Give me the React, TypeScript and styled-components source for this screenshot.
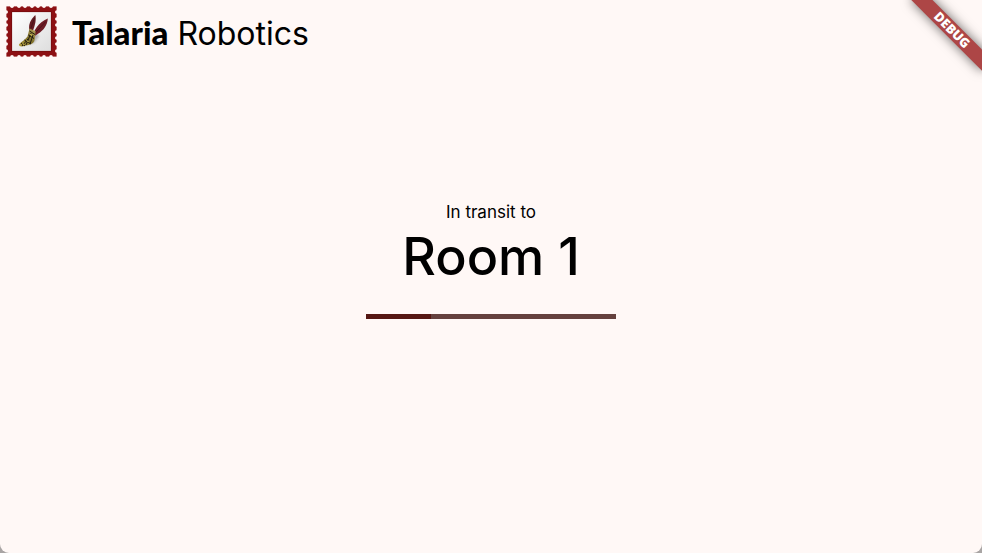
import React from "react";
import styled, { createGlobalStyle } from "styled-components";

const GlobalStyle = createGlobalStyle`
  * { box-sizing: border-box; }
  body { margin: 0; background: #a9a5a4; }
`;

const Screen = styled.div`
  position: relative;
  display: flex;
  flex-direction: column;
  min-height: 100vh;
  overflow: hidden;
  border-radius: 0 0 9px 9px;
  background: #fff8f6;
  color: #000;
  font-family: Inter, "Liberation Sans", sans-serif;
`;

const Header = styled.header`
  display: flex;
  align-items: center;
  gap: 14px;
  padding: 5px;
`;

const StampIcon = styled.svg`
  flex: none;
  width: 53px;
  height: 53px;
`;

const Brand = styled.h1`
  margin: 0;
  padding-top: 2px;
  font-size: 32px;
  line-height: 40px;
  font-weight: 400;
`;

const BrandStrong = styled.span`
  font-family: Lato, sans-serif;
  font-size: 33px;
  font-weight: 900;
`;

const Status = styled.main`
  flex: 1;
  display: flex;
  flex-direction: column;
  align-items: center;
  justify-content: center;
  padding-bottom: 96px;
`;

const Caption = styled.p`
  margin: 0;
  font-size: 17px;
  line-height: 20px;
`;

const Destination = styled.h2`
  margin: 0 0 22px;
  font-size: 52px;
  line-height: 70px;
  font-weight: 500;
`;

const Track = styled.div`
  width: 250px;
  max-width: 100%;
  height: 5px;
  background: #65413e;
`;

const Fill = styled.div`
  height: 100%;
  background: #561713;
`;

const Corner = styled.div`
  position: absolute;
  top: 0;
  right: 0;
  width: 90px;
  height: 90px;
  overflow: hidden;
  pointer-events: none;
`;

const Ribbon = styled.div`
  position: absolute;
  top: 35px;
  left: 40px;
  width: 100px;
  height: 15px;
  transform: rotate(45deg);
  transform-origin: 50px -35px;
  background: #ad4646;
  box-shadow: 0 0 12px rgba(0, 0, 0, 0.6);
  color: #fff;
  font-family: "Noto Sans", "Open Sans", sans-serif;
  font-size: 13px;
  line-height: 15px;
  font-weight: 900;
  text-align: center;
`;

const notches = [7, 14, 20, 27, 33, 39, 46];

function Stamp() {
  return (
    <StampIcon viewBox="0 0 53 53" aria-hidden="true">
      <defs>
        <linearGradient id="paper" x1="0" y1="0" x2="1" y2="1">
          <stop offset="0" stopColor="#ffffff" />
          <stop offset="1" stopColor="#dedede" />
        </linearGradient>
        <linearGradient id="boot" x1="0" y1="1" x2="1" y2="0">
          <stop offset="0" stopColor="#b29c3c" />
          <stop offset="0.5" stopColor="#7e7029" />
          <stop offset="1" stopColor="#b5a15c" />
        </linearGradient>
        <filter id="soft"><feGaussianBlur stdDeviation="1.2" /></filter>
      </defs>
      <rect x="1.4" y="1.4" width="50.2" height="50.2" fill="#8d1013" />
      {notches.map((n) => (
        <g key={n} fill="#fff8f6">
          <circle cx={n} cy="1.2" r="1.8" />
          <circle cx={n} cy="51.8" r="1.8" />
          <circle cx="1.2" cy={n} r="1.8" />
          <circle cx="51.8" cy={n} r="1.8" />
        </g>
      ))}
      <rect x="6.5" y="6.5" width="40" height="40" fill="#6c0b0d" />
      <rect x="7.1" y="7.1" width="38.8" height="38.8" fill="url(#paper)" />
      <path d="M20 40 L29 38 L34 31 L31 28Z" fill="#777" opacity="0.5" filter="url(#soft)" />
      <path d="M24.3 25C23.4 20 25 15 30.3 10C31.4 14 30.3 20 27.4 27Z" fill="#641b22" />
      <path d="M27.6 32.5C28.5 25 33 18 42.8 13.5C42.4 20 38.8 25.3 33 28.8Z" fill="#6e1c25" />
      <path d="M29.3 29L40.6 16.7M26 23L29.5 13" stroke="#421016" strokeWidth="0.8" />
      <path d="M24.5 23.4L30.6 26.3L29.8 34C29.4 37.4 27.4 38.9 25.2 39.4L18.3 41.3C15.5 41.9 13.8 41.3 14 39.3C16.7 36.4 20.5 34.7 22.5 31.6Z" fill="url(#boot)" />
      <path d="M24.5 26L30 29.5M23.3 30L29 33.5M19.5 35L26 39M16 38L20 41M25 39L28 30M21 40L26 28M17 41L23 34" stroke="#211b10" strokeWidth="1" />
      <path d="M25 29L27 30.5M21.5 35.5L23.5 36.8M17.5 38.7L19 39.5" stroke="#dcc957" strokeWidth="1" />
    </StampIcon>
  );
}

export default function App() {
  const progress = 26;
  return (
    <>
      <GlobalStyle />
      <Screen>
        <Header>
          <Stamp />
          <Brand>
            <BrandStrong>Talaria</BrandStrong> Robotics
          </Brand>
        </Header>
        <Status>
          <Caption>In transit to</Caption>
          <Destination>Room 1</Destination>
          <Track
            role="progressbar"
            aria-label="Transit progress"
            aria-valuemin={0}
            aria-valuemax={100}
            aria-valuenow={progress}
          >
            <Fill style={{ width: `${progress}%` }} />
          </Track>
        </Status>
        <Corner>
          <Ribbon>DEBUG</Ribbon>
        </Corner>
      </Screen>
    </>
  );
}
